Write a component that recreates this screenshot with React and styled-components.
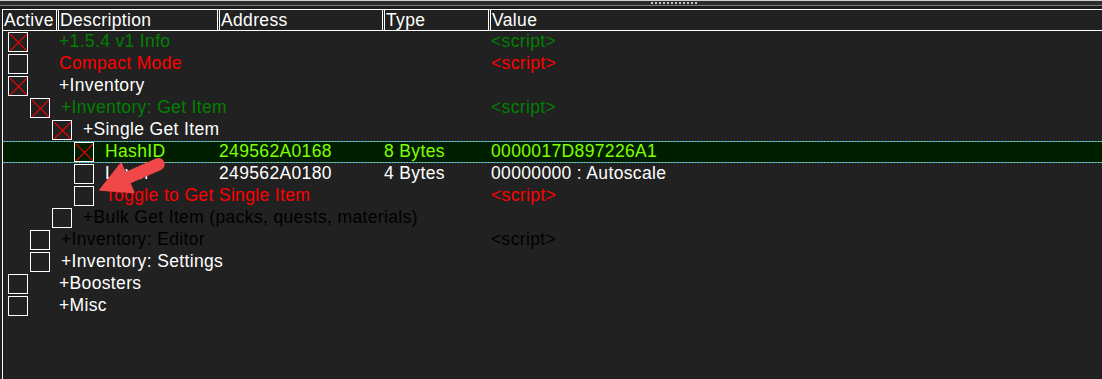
import React from "react";
import styled, { createGlobalStyle } from "styled-components";

const GlobalStyle = createGlobalStyle`
	html, body {
		margin: 0;
		padding: 0;
		background: #212121;
	}
	body {
		font-family: "Liberation Sans", Arial, sans-serif;
	}
`;

const entries = [
	{ depth: 0, on: true, desc: "+1.5.4 v1 Info", value: "<script>", color: "#008000" },
	{ depth: 0, on: false, desc: "Compact Mode", value: "<script>", color: "#ff0000" },
	{ depth: 0, on: true, desc: "+Inventory", color: "#ffffff" },
	{ depth: 1, on: true, desc: "+Inventory: Get Item", value: "<script>", color: "#008000" },
	{ depth: 2, on: true, desc: "+Single Get Item", color: "#ffffff" },
	{
		depth: 3,
		on: true,
		desc: "HashID",
		address: "249562A0168",
		type: "8 Bytes",
		value: "0000017D897226A1",
		color: "#80ff00",
		selected: true,
	},
	{
		depth: 3,
		on: false,
		desc: "Level",
		address: "249562A0180",
		type: "4 Bytes",
		value: "00000000 : Autoscale",
		color: "#ffffff",
	},
	{ depth: 3, on: false, desc: "Toggle to Get Single Item", value: "<script>", color: "#ff0000" },
	{ depth: 2, on: false, desc: "+Bulk Get Item (packs, quests, materials)", color: "#000000" },
	{ depth: 1, on: false, desc: "+Inventory: Editor", value: "<script>", color: "#000000" },
	{ depth: 1, on: false, desc: "+Inventory: Settings", color: "#ffffff" },
	{ depth: 0, on: false, desc: "+Boosters", color: "#ffffff" },
	{ depth: 0, on: false, desc: "+Misc", color: "#ffffff" },
];

const App = () => {
	return (
		<>
			<GlobalStyle />
			<Window>
				<TopStrip>
					<Grip>
						{Array.from({ length: 12 }).map((_, i) => (
							<GripDot key={i} />
						))}
					</Grip>
				</TopStrip>
				<Table>
					<Header>
						<HeadCell $w={54}>Active</HeadCell>
						<HeadCell $w={160}>Description</HeadCell>
						<HeadCell $w={164}>Address</HeadCell>
						<HeadCell $w={105}>Type</HeadCell>
						<HeadCell $grow>Value</HeadCell>
					</Header>
					{entries.map((e, i) => (
						<Row key={i} $selected={e.selected} $color={e.color}>
							<DescCell>
								<Lead $depth={e.depth}>
									<Check>
										{e.on && (
											<svg width="17" height="17" viewBox="0 0 17 17">
												<path d="M0 0L17 17M17 0L0 17" stroke="#ff0000" strokeWidth="1.1" />
											</svg>
										)}
									</Check>
								</Lead>
								<Text>{e.desc}</Text>
							</DescCell>
							<Text>{e.address}</Text>
							<Text>{e.type}</Text>
							<Text>{e.value}</Text>
						</Row>
					))}
				</Table>
				<Arrow width="72" height="48" viewBox="0 0 72 48">
					<path
						d="M4 40 L25.1 13.3 L29.3 22.9 L60.8 9 A5.5 5.5 0 0 1 65.2 19 L33.7 32.9 L37.9 42.5 Z"
						fill="#f04848"
						stroke="#f04848"
						strokeWidth="1.5"
						strokeLinejoin="round"
					/>
				</Arrow>
			</Window>
		</>
	);
};

const Window = styled.div`
	position: relative;
	height: 100vh;
	overflow: hidden;
	background: #212121;
	font-size: 17.5px;
	letter-spacing: 0.35px;
`;

const TopStrip = styled.div`
	height: 9px;
	box-sizing: border-box;
	border-top: 1px solid #cfcfcf;
	background: linear-gradient(
		#2b2b2b 0 4px,
		#7c7c7c 4px 5px,
		#1c1c1c 5px
	);
	display: flex;
`;

const Grip = styled.div`
	display: flex;
	gap: 2px;
	margin-top: 1px;
	margin-left: 651px;
	height: 2px;
`;

const GripDot = styled.div`
	width: 2px;
	height: 2px;
	background: #c4c4c4;
`;

const Table = styled.div`
	margin-left: 2px;
	border-left: 1px solid #ffffff;
	min-height: 370px;
`;

const Header = styled.div`
	display: flex;
	height: 22px;
	box-sizing: border-box;
	border-top: 1px solid #ffffff;
	border-bottom: 1px solid #ffffff;
	color: #ffffff;
	line-height: 20px;
`;

const HeadCell = styled.div`
	box-sizing: border-box;
	width: ${(p) => (p.$w ? `${p.$w}px` : "auto")};
	flex: ${(p) => (p.$grow ? "1" : "none")};
	padding-left: 1px;
	margin-right: 1px;
	border-right: 1px solid #ffffff;
	& + & {
		border-left: 1px solid #ffffff;
	}
	&:last-child {
		border-right: none;
		margin-right: 0;
	}
`;

const Row = styled.div`
	display: grid;
	grid-template-columns: 215px 165px 107px 1fr;
	height: 22px;
	box-sizing: border-box;
	color: ${(p) => p.$color};
	white-space: nowrap;
	background: ${(p) => (p.$selected ? "#001f00" : "transparent")};
	border-top: 1px solid transparent;
	border-bottom: 1px solid transparent;
	border-image: ${(p) =>
		p.$selected
			? "repeating-linear-gradient(90deg, #2d9bff 0 2px, #c6d80a 2px 3px) 1"
			: "none"};
`;

const DescCell = styled.div`
	display: flex;
	align-items: flex-start;
	min-width: 0;
`;

const Lead = styled.div`
	flex: none;
	box-sizing: border-box;
	width: ${(p) => Math.max(55, 35 + 22 * p.$depth)}px;
	padding-left: ${(p) => 5 + 22 * p.$depth}px;
`;

const Check = styled.div`
	width: 20px;
	height: 20px;
	box-sizing: border-box;
	border: 1.5px solid #ffffff;
	display: flex;
	align-items: center;
	justify-content: center;
	svg {
		display: block;
	}
`;

const Text = styled.div`
	flex: none;
	line-height: 18px;
	padding-left: 1px;
`;

const Arrow = styled.svg`
	position: absolute;
	left: 96px;
	top: 150px;
`;

export default App;
